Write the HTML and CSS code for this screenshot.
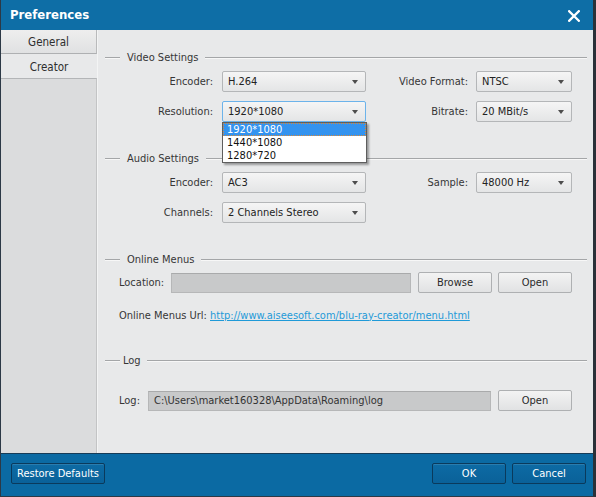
FILE: index.html
```html
<!DOCTYPE html>
<html>
<head>
<meta charset="utf-8">
<title>Preferences</title>
<link rel="stylesheet" href="styles.css">
</head>
<body>
<div class="window">
  <div class="titlebar">
    <span class="title">Preferences</span>
    <svg class="close" width="12" height="12" viewBox="0 0 12 12"><path d="M1.2 1.2 L10.8 10.8 M10.8 1.2 L1.2 10.8" stroke="#ffffff" stroke-width="2.3" stroke-linecap="square" fill="none"/></svg>
  </div>
  <div class="main">
    <div class="sidebar">
      <div class="tab">General</div>
      <div class="tab active">Creator</div>
      <div class="sidebar-rest"></div>
    </div>
    <div class="panel">
      <div class="group-head gh-first"><span class="gl gl-short"></span><span class="gt">Video Settings</span><span class="gl gl-long"></span></div>
      <div class="frow r-first">
        <span class="lbl1">Encoder:</span>
        <div class="combo c1">H.264</div>
        <span class="lbl2">Video Format:</span>
        <div class="combo c2">NTSC</div>
      </div>
      <div class="frow r-next">
        <span class="lbl1">Resolution:</span>
        <div class="combo c1 focused">1920*1080
          <div class="droplist">
            <div class="item sel">1920*1080</div>
            <div class="item">1440*1080</div>
            <div class="item">1280*720</div>
          </div>
        </div>
        <span class="lbl2">Bitrate:</span>
        <div class="combo c2">20 MBit/s</div>
      </div>

      <div class="group-head gh-next"><span class="gl gl-short"></span><span class="gt">Audio Settings</span><span class="gl gl-long"></span></div>
      <div class="frow r-first">
        <span class="lbl1">Encoder:</span>
        <div class="combo c1">AC3</div>
        <span class="lbl2">Sample:</span>
        <div class="combo c2">48000 Hz</div>
      </div>
      <div class="frow r-next">
        <span class="lbl1">Channels:</span>
        <div class="combo c1">2 Channels Stereo</div>
      </div>

      <div class="group-head gh-next"><span class="gl gl-short"></span><span class="gt">Online Menus</span><span class="gl gl-long"></span></div>
      <div class="frow r-loc">
        <span class="lbl-loc">Location:</span>
        <div class="field f-loc"></div>
        <div class="btn b-browse">Browse</div>
        <div class="btn b-open">Open</div>
      </div>
      <div class="urlrow">
        <span class="lbl-url">Online Menus Url:</span>
        <a class="link" href="#">http://www.aiseesoft.com/blu-ray-creator/menu.html</a>
      </div>

      <div class="group-head gh-log"><span class="gl gl-short"></span><span class="gt">Log</span><span class="gl gl-long"></span></div>
      <div class="frow r-log">
        <span class="lbl-log">Log:</span>
        <div class="field f-log">C:\Users\market160328\AppData\Roaming\log</div>
        <div class="btn b-open2">Open</div>
      </div>
    </div>
  </div>
  <div class="footer">
    <div class="fbtn f-restore">Restore Defaults</div>
    <div class="fspacer"></div>
    <div class="fbtn f-ok">OK</div>
    <div class="fbtn f-cancel">Cancel</div>
  </div>
</div>
</body>
</html>
```
FILE: styles.css
```css
html, body {
  margin: 0;
  padding: 0;
  background: #ffffff;
}
body {
  font-family: "DejaVu Sans", sans-serif;
  font-stretch: condensed;
  font-size: 11px;
  color: #363636;
}
.window {
  width: 596px;
  height: 497px;
  box-sizing: border-box;
  border-left: 1px solid #2c3946;
  border-right: 3px solid #2a3038;
  border-bottom: 1px solid #2c3946;
  display: flex;
  flex-direction: column;
  background: #e8e9ea;
}
.titlebar {
  height: 30px;
  flex: none;
  background: #0e6ea6;
  display: flex;
  align-items: center;
  padding-left: 9px;
  box-sizing: border-box;
}
.title {
  color: #ffffff;
  font-weight: bold;
  font-size: 13px;
  margin-top: -1px;
}
.close {
  margin-left: auto;
  margin-right: 13px;
  margin-top: 1px;
}
.main {
  flex: 1;
  display: flex;
  min-height: 0;
}
.sidebar {
  width: 96px;
  flex: none;
  display: flex;
  flex-direction: column;
}
.tab {
  height: 24px;
  box-sizing: border-box;
  display: flex;
  align-items: center;
  justify-content: center;
  color: #2e2e2e;
  font-size: 11.5px;
  padding-top: 1px;
}
.tab:first-child {
  background: linear-gradient(#eeeeee, #e0e1e2);
  border-right: 1px solid #b9babb;
  border-bottom: 1px solid #aeb0b2;
}
.tab.active {
  background: #e8e9ea;
}
.sidebar-rest {
  flex: 1;
  background: #dbdcdd;
  border-top: 1px solid #b3b5b7;
  border-right: 1px solid #c3c4c5;
}
.panel {
  flex: 1;
  border-left: 1px solid #f3f4f4;
  padding-top: 20px;
  position: relative;
}
.group-head {
  display: flex;
  align-items: center;
  height: 14px;
  margin: 0 6px 0 7px;
  color: #363636;
}
.gh-next { margin-top: 29px; }
.gh-log { margin-top: 31px; }
.gl {
  height: 1px;
  background: #a4a6a8;
  box-shadow: 0 1px 0 #f7f7f7;
}
.gl-short { width: 15px; flex: none; }
.gl-long { flex: 1; }
.gt {
  margin: 0 7px 0 7px;
  white-space: nowrap;
}
.gh-log .gt { margin: 0 6px 0 3px; }
.frow {
  display: flex;
  align-items: center;
  height: 21px;
}
.r-first { margin-top: 7px; }
.r-next { margin-top: 9px; }
.lbl1 {
  width: 115px;
  text-align: right;
  flex: none;
}
.lbl2 {
  width: 102px;
  text-align: right;
  flex: none;
}
.combo {
  position: relative;
  height: 21px;
  box-sizing: border-box;
  border: 1px solid #b4b6b8;
  border-radius: 2px;
  background: linear-gradient(#f5f5f5, #e4e5e6);
  padding-left: 5px;
  display: flex;
  align-items: center;
  color: #222222;
  flex: none;
}
.combo::after {
  content: "";
  position: absolute;
  right: 7px;
  top: 8px;
  border-top: 4px solid #4d4d4d;
  border-left: 3.5px solid transparent;
  border-right: 3.5px solid transparent;
}
.c1 {
  width: 144px;
  margin-left: 9px;
}
.c2 {
  width: 96px;
  margin-left: 8px;
}
.focused {
  border-color: #6cb3ea;
}
.droplist {
  position: absolute;
  left: -1px;
  top: 20px;
  width: 145px;
  box-sizing: border-box;
  background: #ffffff;
  border: 1px solid #5e5e5e;
  box-shadow: 2px 2px 2px rgba(0, 0, 0, 0.35);
  z-index: 5;
}
.item {
  height: 13px;
  line-height: 13px;
  padding-left: 4px;
  color: #111111;
  font-size: 11px;
}
.item.sel {
  background: #3393ef;
  color: #ffffff;
  outline: 1px dotted #d8893a;
  outline-offset: -1px;
}
.r-loc { margin-top: 6px; }
.lbl-loc {
  width: 52px;
  margin-left: 21px;
  flex: none;
}
.field {
  height: 20px;
  box-sizing: border-box;
  background: #c8c9ca;
  border: 1px solid #b6b7b8;
  border-top-color: #a9aaab;
  flex: none;
  display: flex;
  align-items: center;
  padding-left: 5px;
  color: #333333;
}
.f-loc { width: 240px; }
.btn {
  height: 21px;
  width: 74px;
  box-sizing: border-box;
  border: 1px solid #aeb0b2;
  border-radius: 2px;
  background: linear-gradient(#f3f3f3, #e1e2e3);
  display: flex;
  align-items: center;
  justify-content: center;
  color: #2a2a2a;
  flex: none;
}
.b-browse { margin-left: 7px; }
.b-open { margin-left: 6px; }
.urlrow {
  display: flex;
  align-items: center;
  height: 14px;
  margin-top: 15px;
}
.lbl-url {
  width: 91px;
  margin-left: 21px;
  flex: none;
}
.link {
  color: #1f9ad8;
  text-decoration: underline;
}
.r-log { margin-top: 23px; }
.lbl-log {
  width: 29px;
  margin-left: 21px;
  flex: none;
}
.f-log { width: 343px; }
.b-open2 { margin-left: 7px; }
.footer {
  height: 43px;
  flex: none;
  box-sizing: border-box;
  background: #0b6aa3;
  border-top: 1px solid #163c58;
  display: flex;
  align-items: flex-start;
  padding: 9px 7px 0 10px;
}
.fspacer { flex: 1; }
.fbtn {
  height: 21px;
  box-sizing: border-box;
  border: 1px solid #0a3a5c;
  border-radius: 2px;
  background: linear-gradient(#0d6ba4, #0a6199);
  box-shadow: inset 0 1px 0 rgba(255, 255, 255, 0.12);
  color: #ffffff;
  display: flex;
  align-items: center;
  justify-content: center;
}
.f-restore { width: 94px; }
.f-ok { width: 74px; }
.f-cancel { width: 74px; margin-left: 6px; }
```
